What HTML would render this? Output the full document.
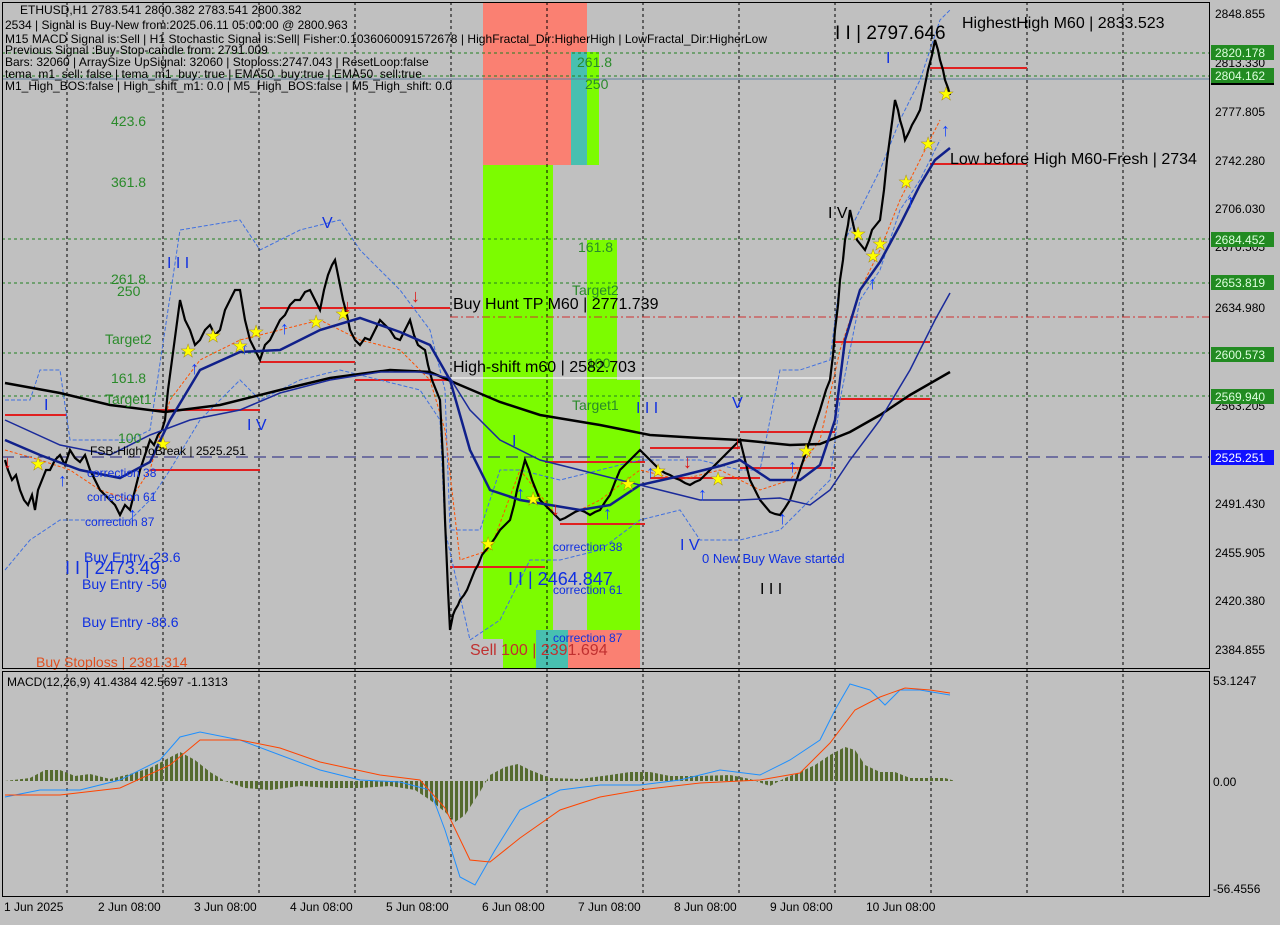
<!DOCTYPE html>
<html><head><meta charset="utf-8"><style>
body{margin:0;background:#c0c0c0;width:1280px;height:920px;overflow:hidden;font-family:"Liberation Sans",sans-serif}
svg text{font-family:"Liberation Sans",sans-serif}
</style></head><body>
<svg width="1280" height="920" xmlns="http://www.w3.org/2000/svg">
<defs><pattern id="hp" width="5" height="10" patternUnits="userSpaceOnUse"><rect width="3" height="10" fill="#556b2f"/></pattern></defs>
<rect width="1280" height="920" fill="#c0c0c0"/>
<rect x="483" y="2" width="104" height="163" fill="#fa8072"/>
<rect x="571" y="52" width="16" height="113" fill="#48c0b0"/>
<rect x="587" y="52" width="12" height="113" fill="#7cfc00"/>
<rect x="483" y="165" width="70" height="474" fill="#7cfc00"/>
<rect x="503" y="639" width="33" height="30" fill="#7cfc00"/>
<rect x="536" y="630" width="32" height="39" fill="#48c0b0"/>
<rect x="568" y="630" width="72" height="39" fill="#fa8072"/>
<rect x="587" y="240" width="30" height="390" fill="#7cfc00"/>
<rect x="617" y="380" width="23" height="250" fill="#7cfc00"/>
<g stroke="#000" stroke-dasharray="3,3" stroke-width="1">
<line x1="67" y1="2" x2="67" y2="896"/><line x1="163" y1="2" x2="163" y2="896"/><line x1="259" y1="2" x2="259" y2="896"/><line x1="355" y1="2" x2="355" y2="896"/><line x1="451" y1="2" x2="451" y2="896"/><line x1="547" y1="2" x2="547" y2="896"/><line x1="643" y1="2" x2="643" y2="896"/><line x1="739" y1="2" x2="739" y2="896"/><line x1="835" y1="2" x2="835" y2="896"/><line x1="931" y1="2" x2="931" y2="896"/><line x1="1027" y1="2" x2="1027" y2="896"/><line x1="1123" y1="2" x2="1123" y2="896"/>
</g>
<g stroke="#208020" stroke-dasharray="3,3">
<line x1="2" y1="53" x2="1209" y2="53"/><line x1="2" y1="76" x2="1209" y2="76"/><line x1="2" y1="239" x2="1209" y2="239"/><line x1="2" y1="283" x2="1209" y2="283"/><line x1="2" y1="353" x2="1209" y2="353"/><line x1="2" y1="396" x2="1209" y2="396"/>
</g>
<line x1="2" y1="79" x2="1209" y2="79" stroke="#6080a0"/>
<line x1="450" y1="317" x2="1209" y2="317" stroke="#d03030" stroke-dasharray="8,3,2,3"/>
<line x1="450" y1="378" x2="830" y2="378" stroke="#fff"/>
<line x1="2" y1="457" x2="1209" y2="457" stroke="#202080" stroke-dasharray="12,6"/>
<g stroke="#e02020" stroke-width="2">
<line x1="5" y1="415" x2="67" y2="415"/><line x1="150" y1="410" x2="260" y2="410"/><line x1="150" y1="470" x2="260" y2="470"/><line x1="260" y1="308" x2="450" y2="308"/><line x1="260" y1="362" x2="355" y2="362"/><line x1="355" y1="380" x2="450" y2="380"/><line x1="450" y1="567" x2="545" y2="567"/><line x1="545" y1="462" x2="645" y2="462"/><line x1="560" y1="524" x2="645" y2="524"/><line x1="650" y1="448" x2="740" y2="448"/><line x1="650" y1="478" x2="760" y2="478"/><line x1="740" y1="468" x2="835" y2="468"/><line x1="740" y1="432" x2="835" y2="432"/><line x1="835" y1="342" x2="930" y2="342"/><line x1="835" y1="399" x2="930" y2="399"/><line x1="930" y1="68" x2="1027" y2="68"/><line x1="930" y1="164" x2="1027" y2="164"/>
</g>
<polyline fill="none" stroke="#4070e0" stroke-dasharray="4,2" points="5,400 30,400 40,370 60,370 70,440 100,440 130,440 150,430 180,230 240,220 260,250 300,230 340,220 360,250 400,290 430,330 445,390 450,530 480,530 500,470 520,470 560,480 600,470 640,460 700,460 740,470 760,470 780,370 800,370 830,360 845,240 880,170 900,120 920,80 940,20 950,10"/>
<polyline fill="none" stroke="#4070e0" stroke-dasharray="4,2" points="5,570 30,540 60,520 90,520 130,520 150,500 170,470 200,420 240,380 260,400 300,380 340,370 380,380 420,390 440,420 445,530 470,640 500,620 530,560 560,560 600,550 640,520 680,510 700,540 740,540 780,530 800,510 830,480 840,400 860,300 880,270 900,210 920,180 940,140"/>
<polyline fill="none" stroke="#ff5000" stroke-dasharray="3,2" points="5,450 40,460 70,470 100,490 130,500 150,470 170,400 200,360 240,340 280,330 320,320 360,340 400,350 430,380 445,430 460,560 490,550 520,470 560,520 600,500 640,470 680,480 720,470 760,490 790,480 820,440 840,350 860,290 880,250 900,200 920,160 940,120"/>
<polyline fill="none" stroke="#000" stroke-width="2.2" points="5,460 8,470 12,480 16,475 20,490 24,500 28,505 32,495 35,510 38,490 42,480 46,470 50,470 55,460 60,455 65,465 70,450 75,458 80,462 85,455 90,470 95,480 100,490 105,495 110,500 115,505 120,515 125,505 130,510 135,490 140,470 145,455 150,440 154,445 158,435 162,430 165,420 168,390 172,360 176,330 180,300 185,320 190,330 195,345 200,340 205,330 210,325 215,335 220,330 225,310 230,300 235,290 240,290 245,320 250,340 255,350 260,360 265,345 270,340 275,330 280,320 285,315 290,305 295,300 300,300 305,292 310,290 315,300 320,310 324,290 328,275 332,265 335,260 339,280 343,300 347,315 350,330 355,340 360,345 365,338 370,340 375,330 380,320 385,325 390,330 395,338 400,340 405,330 410,320 414,335 418,345 422,348 425,350 428,365 432,380 436,390 440,400 443,460 445,520 448,590 450,630 453,615 455,610 458,605 460,600 464,595 467,590 471,580 475,570 478,565 482,555 486,550 490,545 495,538 500,530 505,525 510,520 514,505 517,490 521,475 525,460 529,470 532,480 536,490 540,500 545,505 550,510 555,515 560,520 565,518 570,515 575,512 580,510 585,512 590,515 595,512 600,510 605,502 610,495 615,482 620,470 625,465 630,460 635,455 640,450 645,455 650,460 655,465 660,470 665,473 670,475 675,478 680,480 685,483 690,485 695,482 700,480 705,475 710,470 715,465 720,460 725,455 730,450 735,445 740,440 745,460 750,480 755,490 760,500 765,506 770,512 775,514 780,515 785,508 790,500 795,485 800,470 805,455 810,440 815,425 820,410 823,400 826,390 830,380 833,355 835,330 838,305 840,280 843,260 845,240 848,225 850,210 854,228 857,240 861,245 865,250 869,240 872,230 876,225 880,220 884,190 887,160 891,130 895,100 898,110 900,120 903,130 905,140 909,132 912,125 916,118 920,110 924,90 928,70 932,55 935,40 938,50 940,60 943,70 945,80 948,88 950,95"/>
<polyline fill="none" stroke="#000" stroke-width="2.5" points="5,383 60,393 110,405 165,412 220,405 280,390 330,378 390,370 430,372 460,385 500,402 540,415 600,425 650,435 700,438 740,440 790,445 820,444 850,432 880,415 910,395 950,372"/>
<polyline fill="none" stroke="#10208a" stroke-width="2.5" points="5,440 40,455 80,470 120,478 150,462 170,420 200,370 240,352 280,350 320,330 360,318 400,332 430,345 450,380 470,450 490,490 520,500 550,505 580,510 610,505 640,485 680,476 720,466 740,460 770,480 800,480 820,465 835,420 845,340 860,290 880,262 900,225 920,185 935,160 950,148"/>
<polyline fill="none" stroke="#1a2a9a" stroke-width="1.5" points="5,420 60,445 110,455 150,435 190,420 240,410 280,393 330,380 380,372 420,372 450,378 470,410 500,440 540,460 580,470 620,480 660,490 700,500 740,500 780,498 810,505 830,490 850,460 880,420 910,370 935,320 950,293"/>
<g font-size="18" font-weight="bold" fill="#1040ff">
<text x="58" y="486">↑</text><text x="128" y="520">↑</text><text x="190" y="374">↑</text><text x="240" y="354">↑</text><text x="280" y="334">↑</text><text x="516" y="499">↑</text><text x="603" y="519">↑</text><text x="646" y="478">↑</text><text x="698" y="500">↑</text><text x="778" y="524">↑</text><text x="788" y="472">↑</text><text x="868" y="289">↑</text><text x="906" y="207">↑</text><text x="941" y="136">↑</text>
</g>
<g font-size="18" font-weight="bold" fill="#e01010">
<text x="3" y="468">↓</text><text x="343" y="312">↓</text><text x="411" y="302">↓</text><text x="551" y="515">↓</text><text x="683" y="468">↓</text><text x="733" y="449">↓</text>
</g>
<g font-size="18" fill="#ffff00" stroke="#a08000" stroke-width="0.4">
<text x="30" y="470">★</text><text x="155" y="450">★</text><text x="180" y="357">★</text><text x="205" y="342">★</text><text x="232" y="352">★</text><text x="248" y="338">★</text><text x="308" y="328">★</text><text x="335" y="320">★</text><text x="480" y="550">★</text><text x="525" y="505">★</text><text x="620" y="490">★</text><text x="650" y="477">★</text><text x="710" y="485">★</text><text x="798" y="457">★</text><text x="850" y="240">★</text><text x="865" y="262">★</text><text x="872" y="250">★</text><text x="898" y="188">★</text><text x="920" y="150">★</text><text x="938" y="100">★</text>
</g>
<g font-size="12" fill="#000">
<text x="20" y="14">ETHUSD,H1  2783.541 2800.382 2783.541 2800.382</text>
<text x="5" y="29">2534 | Signal is Buy-New from:2025.06.11 05:00:00 @ 2800.963</text>
<text x="5" y="43" textLength="762">M15 MACD Signal is:Sell | H1 Stochastic Signal is:Sell| Fisher:0.1036060091572678 | HighFractal_Dir:HigherHigh | LowFractal_Dir:HigherLow</text>
<text x="5" y="54">Previous Signal :Buy-Stop-candle from: 2791.009</text>
<text x="5" y="66">Bars: 32060 | ArraySize UpSignal: 32060 | Stoploss:2747.043 | ResetLoop:false</text>
<text x="5" y="78">tema_m1_sell: false | tema_m1_buy: true | EMA50_buy:true | EMA50_sell:true</text>
<text x="5" y="90">M1_High_BOS:false | High_shift_m1: 0.0 | M5_High_BOS:false | M5_High_shift: 0.0</text>
</g>
<g font-size="14" fill="#2a8a2a">
<text x="111" y="126">423.6</text><text x="111" y="187">361.8</text><text x="111" y="284">261.8</text><text x="117" y="296">250</text><text x="105" y="344">Target2</text><text x="111" y="383">161.8</text><text x="105" y="404">Target1</text><text x="118" y="443">100</text>
<text x="577" y="67">261.8</text><text x="585" y="89">250</text><text x="578" y="252">161.8</text><text x="572" y="295">Target2</text><text x="572" y="410">Target1</text><text x="587" y="368">100</text>
</g>
<g font-size="16" fill="#000">
<text x="453" y="309">Buy Hunt TP M60 | 2771.739</text>
<text x="453" y="372">High-shift m60 | 2582.703</text>
<text x="962" y="28">HighestHigh    M60 | 2833.523</text>
<text x="950" y="164">Low before High    M60-Fresh | 2734</text>
<text x="835" y="39" font-size="19">I I | 2797.646</text>
<text x="828" y="218">I V</text><text x="760" y="594">I I I</text>
</g>
<g fill="#1030e0">
<text x="167" y="268" font-size="16">I I I</text><text x="322" y="228" font-size="16">V</text><text x="247" y="430" font-size="16">I V</text>
<text x="44" y="410" font-size="16">I</text><text x="512" y="446" font-size="16">I</text><text x="636" y="413" font-size="16">I I I</text><text x="732" y="408" font-size="16">V</text><text x="680" y="550" font-size="16">I V</text><text x="886" y="63" font-size="16">I</text>
<text x="65" y="574" font-size="18">I I | 2473.49</text><text x="508" y="585" font-size="18">I I | 2464.847</text>
<text x="84" y="562" font-size="14">Buy Entry -23.6</text><text x="82" y="589" font-size="14">Buy Entry -50</text><text x="82" y="627" font-size="14">Buy Entry -88.6</text>
<text x="87" y="477" font-size="12">correction 38</text><text x="87" y="501" font-size="12">correction 61</text><text x="85" y="526" font-size="12">correction 87</text>
<text x="553" y="551" font-size="12">correction 38</text><text x="553" y="594" font-size="12">correction 61</text><text x="553" y="642" font-size="12">correction 87</text>
<text x="702" y="563" font-size="13">0 New Buy Wave started</text>
</g>
<text x="90" y="455" font-size="12" fill="#000">FSB-HighToBreak | 2525.251</text>
<text x="36" y="667" font-size="14" fill="#e05020">Buy Stoploss | 2381.314</text>
<text x="470" y="655" font-size="16" fill="#c03030">Sell 100 | 2391.694</text>
<rect x="2.5" y="2.5" width="1207" height="666" fill="none" stroke="#000"/>
<rect x="2.5" y="671.5" width="1207" height="225" fill="none" stroke="#000"/>
<g font-size="12" fill="#000">
<text x="1215" y="18">2848.855</text><text x="1215" y="67">2813.330</text><text x="1215" y="116">2777.805</text><text x="1215" y="165">2742.280</text><text x="1215" y="213">2706.030</text><text x="1215" y="251">2670.505</text><text x="1215" y="312">2634.980</text><text x="1215" y="410">2563.205</text><text x="1215" y="508">2491.430</text><text x="1215" y="557">2455.905</text><text x="1215" y="605">2420.380</text><text x="1215" y="654">2384.855</text>
<text x="1213" y="685">53.1247</text><text x="1213" y="786">0.00</text><text x="1213" y="893">-56.4556</text>
</g>
<rect x="1211" y="45" width="63" height="15" fill="#228b22"/><text x="1215" y="57" font-size="12" fill="#dfd">2820.178</text>
<rect x="1211" y="80" width="63" height="5" fill="#000"/>
<rect x="1211" y="68" width="63" height="15" fill="#228b22"/><text x="1215" y="80" font-size="12" fill="#dfd">2804.162</text>
<rect x="1211" y="232" width="63" height="15" fill="#228b22"/><text x="1215" y="244" font-size="12" fill="#dfd">2684.452</text>
<rect x="1211" y="275" width="63" height="15" fill="#228b22"/><text x="1215" y="287" font-size="12" fill="#dfd">2653.819</text>
<rect x="1211" y="347" width="63" height="15" fill="#228b22"/><text x="1215" y="359" font-size="12" fill="#dfd">2600.573</text>
<rect x="1211" y="389" width="63" height="15" fill="#228b22"/><text x="1215" y="401" font-size="12" fill="#dfd">2569.940</text>
<rect x="1211" y="450" width="63" height="15" fill="#1010ff"/><text x="1215" y="462" font-size="12" fill="#fff">2525.251</text>
<text x="7" y="686" font-size="12" fill="#000">MACD(12,26,9) 41.4384 42.5697 -1.1313</text>
<polygon fill="url(#hp)" points="5,781 30,778 45,770 60,770 75,776 90,774 110,779 130,774 150,768 165,760 180,752 195,760 210,772 225,781 245,788 270,790 300,786 330,788 360,788 390,786 415,790 430,800 445,812 455,822 465,815 478,795 490,775 505,767 518,764 530,770 550,778 580,779 610,775 630,772 650,772 670,776 700,776 730,775 750,779 770,786 785,778 800,772 815,765 830,755 845,747 855,750 865,765 880,772 895,772 910,778 930,778 945,778 955,781"/>
<polyline fill="none" stroke="#1e90ff" stroke-width="1" points="5,797 40,790 80,790 120,780 160,760 180,737 200,732 240,740 280,755 320,770 360,780 400,782 430,790 445,830 460,877 475,885 495,850 520,810 560,790 600,785 640,785 680,780 720,770 760,775 790,760 820,740 835,710 850,684 870,690 885,705 900,690 920,690 950,695"/>
<polyline fill="none" stroke="#ff4500" stroke-width="1" points="5,795 60,795 120,788 170,765 200,740 240,740 280,748 320,762 380,775 420,780 445,808 470,860 490,862 520,838 560,810 600,797 640,790 700,783 760,780 800,773 830,743 855,710 880,697 905,688 930,690 950,693"/>
<g font-size="12" fill="#000">
<text x="4" y="911">1 Jun 2025</text><text x="98" y="911">2 Jun 08:00</text><text x="194" y="911">3 Jun 08:00</text><text x="290" y="911">4 Jun 08:00</text><text x="386" y="911">5 Jun 08:00</text><text x="482" y="911">6 Jun 08:00</text><text x="578" y="911">7 Jun 08:00</text><text x="674" y="911">8 Jun 08:00</text><text x="770" y="911">9 Jun 08:00</text><text x="866" y="911">10 Jun 08:00</text>
</g>
</svg>
</body></html>
